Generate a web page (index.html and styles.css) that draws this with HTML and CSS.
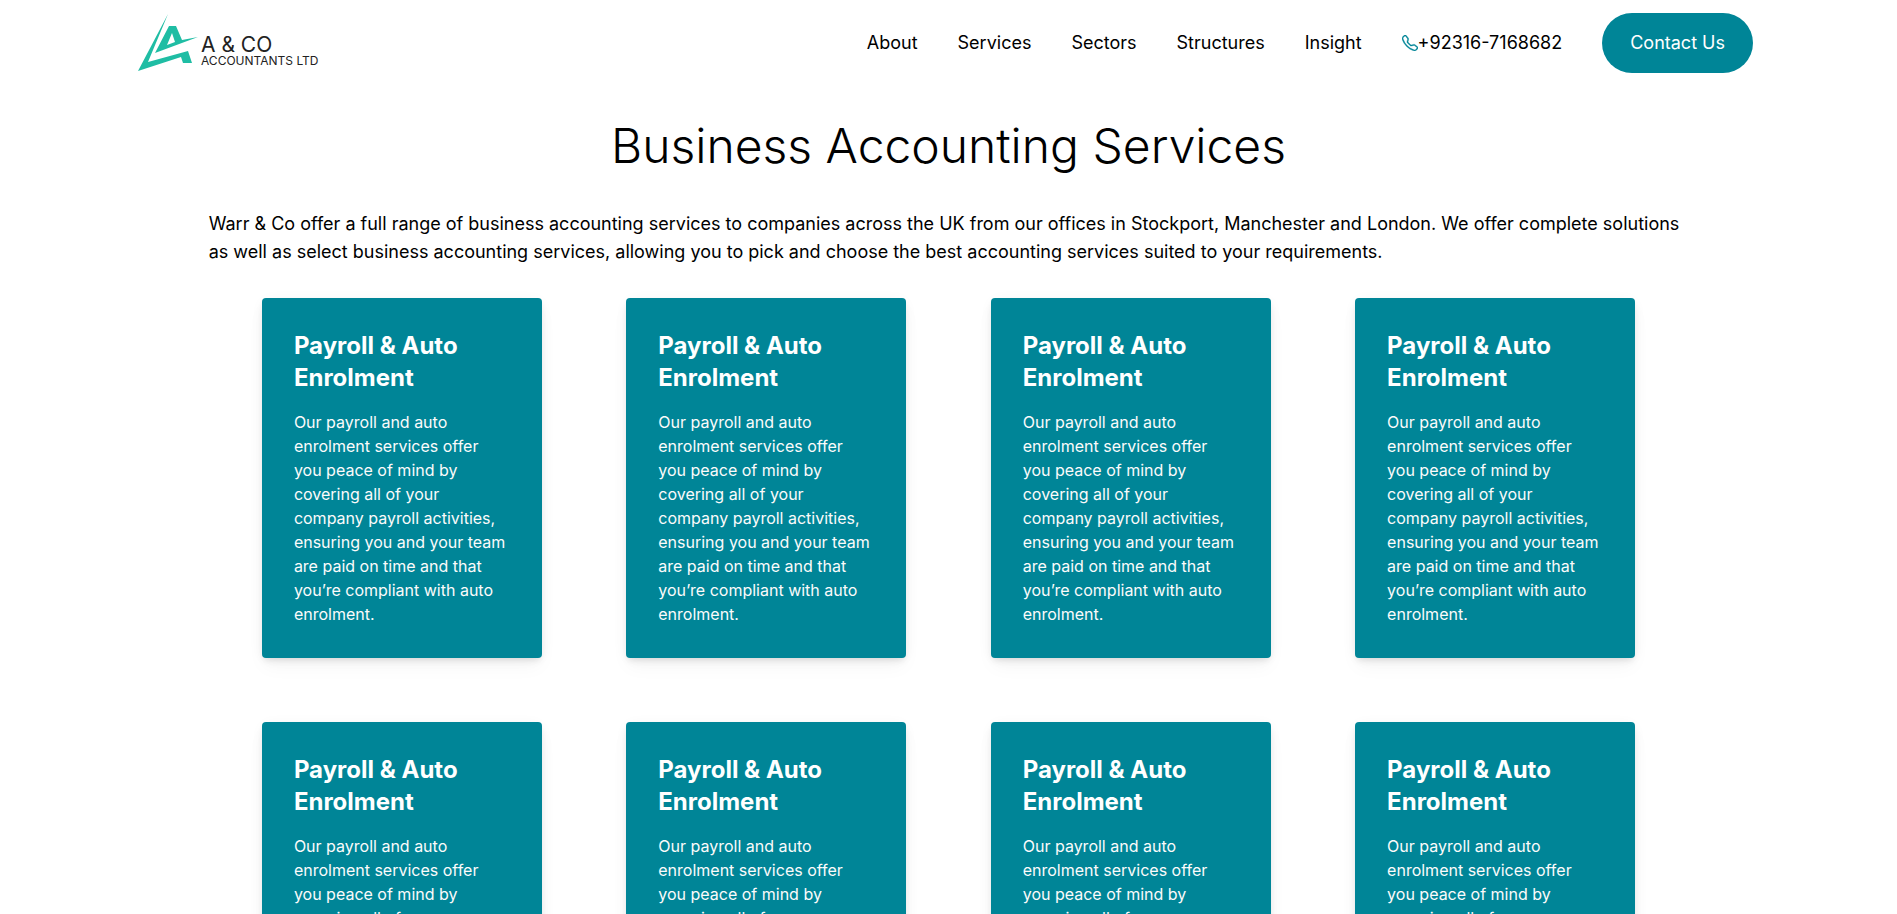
FILE: index.html
```html
<!DOCTYPE html>
<html lang="en">
<head>
<meta charset="utf-8">
<title>Business Accounting Services</title>
<link rel="stylesheet" href="styles.css">
</head>
<body>
<header class="header">
  <a class="logo" href="#" aria-label="A &amp; Co Accountants Ltd">
    <svg class="logo-mark" viewBox="0 0 64 60" width="64" height="60" aria-hidden="true">
      <path fill="#1fbda4" fill-rule="evenodd" d="M31 1 L1 58 L44 44 L46 50 L55 50 L51 38 L11 49 Z M32 13 H39 L45 27 L61 24 L18 40 Z M35 20 L30 32 L38 29 Z"/>
    </svg>
    <span class="logo-text"><span class="logo-name">A &amp; CO</span><span class="logo-sub">ACCOUNTANTS LTD</span></span>
  </a>
  <nav class="nav">
    <a href="#">About</a>
    <a href="#">Services</a>
    <a href="#">Sectors</a>
    <a href="#">Structures</a>
    <a href="#">Insight</a>
    <a class="phone" href="tel:+923167168682"><svg viewBox="0 0 16 16" width="16" height="16" fill="#008597" stroke="#008597" stroke-width="0.4" aria-hidden="true"><path d="M3.654 1.328a.678.678 0 0 0-1.015-.063L1.605 2.3c-.483.484-.661 1.169-.45 1.77a17.568 17.568 0 0 0 4.168 6.608 17.569 17.569 0 0 0 6.608 4.168c.601.211 1.286.033 1.77-.45l1.034-1.034a.678.678 0 0 0-.063-1.015l-2.307-1.794a.678.678 0 0 0-.58-.122l-2.19.547a1.745 1.745 0 0 1-1.657-.459L5.482 8.062a1.745 1.745 0 0 1-.46-1.657l.548-2.19a.678.678 0 0 0-.122-.58L3.654 1.328zM1.884.511a1.745 1.745 0 0 1 2.612.163L6.29 2.98c.329.423.445.974.315 1.494l-.547 2.19a.678.678 0 0 0 .178.643l2.457 2.457a.678.678 0 0 0 .644.178l2.189-.547a1.745 1.745 0 0 1 1.494.315l2.306 1.794c.829.645.905 1.87.163 2.611l-1.034 1.034c-.74.74-1.846 1.065-2.877.702a18.634 18.634 0 0 1-7.01-4.42 18.634 18.634 0 0 1-4.42-7.009c-.362-1.03-.037-2.137.703-2.877L1.885.511z"/></svg>+92316-7168682</a>
    <button class="contact" type="button">Contact Us</button>
  </nav>
</header>
<main class="main">
  <h1>Business Accounting Services</h1>
  <p class="intro">Warr &amp; Co offer a full range of business accounting services to companies across the UK from our offices in Stockport, Manchester and London. We offer complete solutions as well as select business accounting services, allowing you to pick and choose the best accounting services suited to your requirements.</p>
  <section class="cards">
    <article class="card"><h2>Payroll &amp; Auto Enrolment</h2><p>Our payroll and auto enrolment services offer you peace of mind by covering all of your company payroll activities, ensuring you and your team are paid on time and that you’re compliant with auto enrolment.</p></article>
    <article class="card"><h2>Payroll &amp; Auto Enrolment</h2><p>Our payroll and auto enrolment services offer you peace of mind by covering all of your company payroll activities, ensuring you and your team are paid on time and that you’re compliant with auto enrolment.</p></article>
    <article class="card"><h2>Payroll &amp; Auto Enrolment</h2><p>Our payroll and auto enrolment services offer you peace of mind by covering all of your company payroll activities, ensuring you and your team are paid on time and that you’re compliant with auto enrolment.</p></article>
    <article class="card"><h2>Payroll &amp; Auto Enrolment</h2><p>Our payroll and auto enrolment services offer you peace of mind by covering all of your company payroll activities, ensuring you and your team are paid on time and that you’re compliant with auto enrolment.</p></article>
    <article class="card"><h2>Payroll &amp; Auto Enrolment</h2><p>Our payroll and auto enrolment services offer you peace of mind by covering all of your company payroll activities, ensuring you and your team are paid on time and that you’re compliant with auto enrolment.</p></article>
    <article class="card"><h2>Payroll &amp; Auto Enrolment</h2><p>Our payroll and auto enrolment services offer you peace of mind by covering all of your company payroll activities, ensuring you and your team are paid on time and that you’re compliant with auto enrolment.</p></article>
    <article class="card"><h2>Payroll &amp; Auto Enrolment</h2><p>Our payroll and auto enrolment services offer you peace of mind by covering all of your company payroll activities, ensuring you and your team are paid on time and that you’re compliant with auto enrolment.</p></article>
    <article class="card"><h2>Payroll &amp; Auto Enrolment</h2><p>Our payroll and auto enrolment services offer you peace of mind by covering all of your company payroll activities, ensuring you and your team are paid on time and that you’re compliant with auto enrolment.</p></article>
  </section>
</main>
</body>
</html>
```

FILE: styles.css
```css
* { box-sizing: border-box; }
body { margin: 0; font-family: Inter, "Liberation Sans", sans-serif; color: #000; background: #fff; }
a { color: inherit; text-decoration: none; }
.header { display: flex; align-items: center; justify-content: space-between; padding: 13px 144px 13px 137px; }
.logo { display: flex; align-items: center; }
.logo-text { display: flex; flex-direction: column; padding-top: 18px; color: #222; }
.logo-name { font-size: 21px; line-height: 18px; }
.logo-sub { font-size: 12px; line-height: 14px; }
.nav { display: flex; align-items: center; gap: 40px; font-size: 18px; line-height: 28px; font-weight: 400; }
.phone { display: flex; align-items: center; }
.contact { height: 60px; padding: 0 28px; border: 0; border-radius: 30px; background: #008597; color: #fff; font: 400 18px/28px Inter, "Liberation Sans", sans-serif; }
.main { width: 78%; margin: 0 auto; }
h1 { margin: 36px 0 40px; font-size: 48px; line-height: 48px; font-weight: 300; text-align: center; }
.intro { margin: 0; font-size: 18px; line-height: 28px; font-weight: 400; }
.cards { display: grid; grid-template-columns: repeat(4, 1fr); justify-items: center; gap: 64px 0; padding: 32px 11px; }
.card { width: 280px; padding: 32px; border-radius: 4px; background: #008597; color: #fff; box-shadow: 0 2px 15px -3px rgba(0, 0, 0, 0.07), 0 10px 20px -2px rgba(0, 0, 0, 0.04), 0 4px 6px -2px rgba(0, 0, 0, 0.1); }
h2 { margin: 0 0 16px; font-size: 24px; line-height: 32px; font-weight: 700; }
.card p { margin: 0; font-size: 16px; line-height: 24px; color: #fbfbfb; }
```
